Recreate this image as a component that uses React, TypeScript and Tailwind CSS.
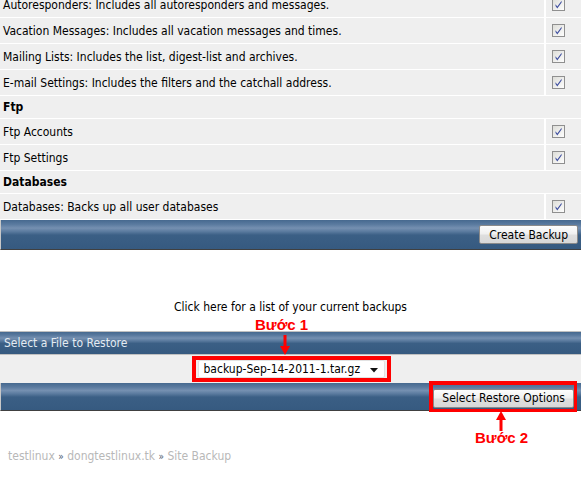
import React from "react";

const font = { fontFamily: '"DejaVu Sans Condensed", "DejaVu Sans", sans-serif' };

function Check() {
  return (
    <svg width="13" height="13" viewBox="0 0 13 13">
      <defs>
        <linearGradient id="cbg" x1="0" y1="0" x2="1" y2="1">
          <stop offset="0" stopColor="#dcdcd7" />
          <stop offset="1" stopColor="#ffffff" />
        </linearGradient>
      </defs>
      <rect x="0.5" y="0.5" width="12" height="12" fill="url(#cbg)" stroke="#8f8f8f" />
      <path d="M3.5 6.2 L5.3 8.6 L9.6 2.8 L9.6 4.6 L5.3 10.4 L3.5 8 Z" fill="#3f4fa0" />
    </svg>
  );
}

function Row({ label }: { label: string }) {
  return (
    <div className="flex h-[26px] border-b border-white bg-[#efefef]">
      <div className="flex flex-1 items-center pl-[3px] text-[12px] text-black">{label}</div>
      <div className="flex w-[37px] items-center border-l-2 border-white pl-[6px]">
        <Check />
      </div>
    </div>
  );
}

function Header({ label }: { label: string }) {
  return (
    <div className="flex h-[23px] items-center border-b border-white bg-[#efefef] pl-[3px] text-[12px] font-bold text-black">
      {label}
    </div>
  );
}

const barBg = "bg-[linear-gradient(to_bottom,#46698f_0%,#5a7a9f_15%,#7590b1_28%,#5a7a9e_40%,#3b5f85_52%,#365a80_100%)]";

const btnCls =
  "h-[19px] whitespace-nowrap rounded-[2px] border border-[#8a8a8a] bg-[linear-gradient(to_bottom,#fdfdfd_0%,#f0f0f0_45%,#dedede_55%,#d8d8d8_100%)] text-[12px] leading-[16px] text-black";

function ArrowDown() {
  return (
    <svg width="12" height="20" viewBox="0 0 12 20">
      <rect x="4.5" y="0" width="3" height="12" fill="#ff0000" />
      <path d="M1 11 L11 11 L6 20 Z" fill="#ff0000" />
    </svg>
  );
}

function ArrowUp() {
  return (
    <svg width="12" height="20" viewBox="0 0 12 20">
      <path d="M1 9 L11 9 L6 0 Z" fill="#ff0000" />
      <rect x="4.5" y="8" width="3" height="12" fill="#ff0000" />
    </svg>
  );
}

export default function App() {
  return (
    <div className="relative h-[478px] w-[581px] overflow-hidden bg-white" style={font}>
      <div className="-mt-[8px]">
        <Row label="Autoresponders: Includes all autoresponders and messages." />
        <Row label="Vacation Messages: Includes all vacation messages and times." />
        <Row label="Mailing Lists: Includes the list, digest-list and archives." />
        <Row label="E-mail Settings: Includes the filters and the catchall address." />
        <Header label="Ftp" />
        <Row label="Ftp Accounts" />
        <Row label="Ftp Settings" />
        <Header label="Databases" />
        <Row label="Databases: Backs up all user databases" />
        <div className={`flex h-[30px] items-center justify-end border-b border-l border-b-[#404040] border-l-[#c8c8c8] pr-[3px] ${barBg}`}>
          <button className={`${btnCls} px-[9px]`}>Create Backup</button>
        </div>
      </div>

      <div className="flex h-[81px] items-end justify-center pb-[15px] text-[12px] leading-[18px] text-black">
        Click here for a list of your current backups
      </div>

      <div className={`flex h-[24px] items-center border-t border-b border-t-[#c0c0c0] border-b-[#c0c0c0] pl-[4px] text-[12px] text-[#e4ebf2] ${barBg}`}>
        Select a File to Restore
      </div>

      <div className="flex h-[28px] items-center justify-center bg-[#efefef]">
        <div className="ml-[1px] border-4 border-[#ff0000] px-[2px]">
          <div className="flex h-[18px] w-[187px] items-center justify-between rounded-[2px] border border-[#e2e2e2] bg-white pl-[5px] pr-[6px] text-[12px] text-black">
            <span className="whitespace-nowrap">backup-Sep-14-2011-1.tar.gz</span>
            <svg width="8" height="5" viewBox="0 0 8 5" className="mt-[3px]">
              <path d="M0 0 L8 0 L4 4.5 Z" fill="#111" />
            </svg>
          </div>
        </div>
      </div>

      <div className={`flex h-[28px] items-center justify-end border-b border-l border-b-[#404040] border-l-[#c8c8c8] pr-[4px] ${barBg}`}>
        <div className="border-[3px] border-t-4 border-l-4 border-[#ff0000]">
          <button className={`${btnCls} px-[8px]`}>Select Restore Options</button>
        </div>
      </div>

      <div className="pl-[8px] pt-[36px] text-[12px] leading-[18px] text-[#b8b8b8]">
        testlinux <span className="text-[10px] text-[#4a5a70]">»</span> dongtestlinux.tk{" "}
        <span className="text-[10px] text-[#4a5a70]">»</span> Site Backup
      </div>

      <div
        className="absolute left-[255px] top-[317px] text-[15px] font-bold leading-[16px] text-[#ff0000]"
        style={{ fontFamily: '"Liberation Sans", Arial, sans-serif' }}
      >
        Bước 1
      </div>
      <div className="absolute left-[279px] top-[335px]">
        <ArrowDown />
      </div>

      <div className="absolute left-[495px] top-[411px]">
        <ArrowUp />
      </div>
      <div
        className="absolute left-[475px] top-[430px] text-[15px] font-bold leading-[16px] text-[#ff0000]"
        style={{ fontFamily: '"Liberation Sans", Arial, sans-serif' }}
      >
        Bước 2
      </div>
    </div>
  );
}
